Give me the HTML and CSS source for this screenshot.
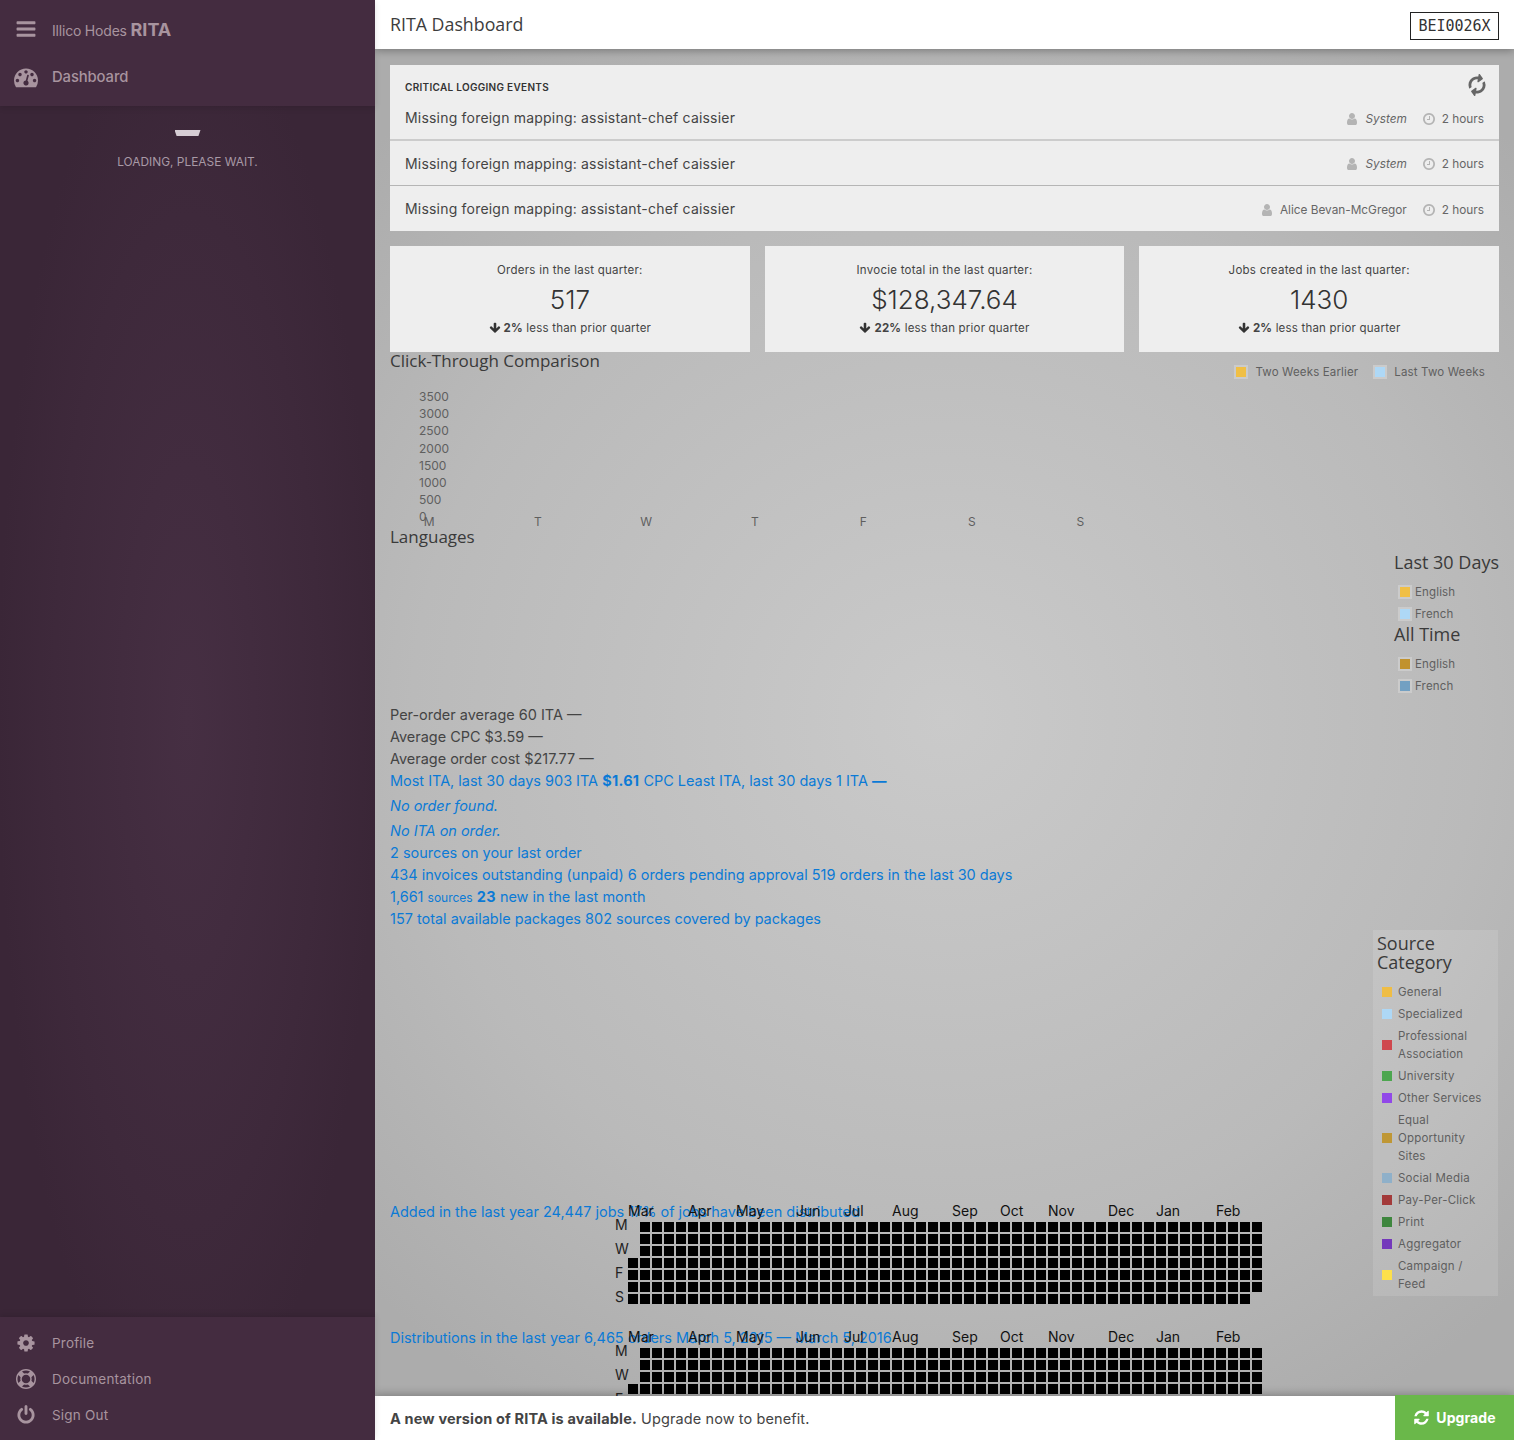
FILE: index.html
```html
<!DOCTYPE html>
<html lang="en">
<head>
    <meta charset="UTF-8">
    <title>RITA Dashboard</title>
    <link rel="stylesheet" href="styles.css">
</head>
<body>
    <svg class="icon-defs" xmlns="http://www.w3.org/2000/svg">
        <symbol id="i-bars" viewBox="0 0 1792 1792"><path d="M1664 1344v128q0 26-19 45t-45 19h-1408q-26 0-45-19t-19-45v-128q0-26 19-45t45-19h1408q26 0 45 19t19 45zm0-512v128q0 26-19 45t-45 19h-1408q-26 0-45-19t-19-45v-128q0-26 19-45t45-19h1408q26 0 45 19t19 45zm0-512v128q0 26-19 45t-45 19h-1408q-26 0-45-19t-19-45v-128q0-26 19-45t45-19h1408q26 0 45 19t19 45z"/></symbol>
        <symbol id="i-dash" viewBox="0 0 1792 1792"><path d="M384 1152q0-53-37.500-90.500t-90.500-37.500-90.500 37.500-37.500 90.500 37.500 90.500 90.500 37.500 90.500-37.500 37.500-90.500zm192-448q0-53-37.500-90.500t-90.500-37.500-90.500 37.500-37.500 90.500 37.500 90.500 90.500 37.500 90.500-37.500 37.500-90.500zm428 481l101-382q6-26-7.500-48.500t-38.500-29.500-48 6.500-30 39.500l-101 382q-60 5-107 43.500t-63 98.500q-20 77 20 146t117 89 146-20 89-117q16-60-6-117t-72-91zm660-33q0-53-37.500-90.500t-90.500-37.500-90.500 37.500-37.500 90.500 37.500 90.500 90.500 37.500 90.500-37.500 37.500-90.500zm-640-640q0-53-37.500-90.500t-90.500-37.500-90.500 37.500-37.500 90.500 37.500 90.500 90.500 37.500 90.500-37.500 37.500-90.500zm448 192q0-53-37.500-90.500t-90.500-37.500-90.500 37.500-37.500 90.500 37.500 90.500 90.500 37.500 90.500-37.500 37.500-90.500zm320 448q0 261-141 483-19 29-54 29h-1402q-35 0-54-29-141-221-141-483 0-182 71-348t191-286 286-191 348-71 348 71 286 191 191 286 71 348z"/></symbol>
        <symbol id="i-cog" viewBox="0 0 1792 1792"><path d="M1152 896q0-106-75-181t-181-75-181 75-75 181 75 181 181 75 181-75 75-181zm512-109v222q0 12-8 23t-20 13l-185 28q-19 54-39 91 35 50 107 138 10 12 10 25t-9 23q-27 37-99 108t-94 71q-12 0-26-9l-138-108q-44 23-91 38-16 136-29 186-7 28-36 28h-222q-14 0-24.500-8.500t-11.500-21.500l-28-184q-49-16-90-37l-141 107q-10 9-25 9-14 0-25-11-126-114-165-168-7-10-7-23 0-12 8-23 15-21 51-66.500t54-70.500q-27-50-41-99l-183-27q-13-2-21-12.500t-8-23.500v-222q0-12 8-23t19-13l186-28q14-46 39-92-40-57-107-138-10-12-10-24 0-10 9-23 26-36 98.500-107.500t94.500-71.500q13 0 26 10l138 107q44-23 91-38 16-136 29-186 7-28 36-28h222q14 0 24.500 8.500t11.500 21.500l28 184q49 16 90 37l142-107q9-9 24-9 13 0 25 10 129 119 165 170 7 8 7 22 0 12-8 23-15 21-51 66.500t-54 70.500q26 50 41 98l183 28q13 2 21 12.500t8 23.500z"/></symbol>
        <symbol id="i-ring" viewBox="0 0 1792 1792"><path d="M896 0q182 0 348 71t286 191 191 286 71 348-71 348-191 286-286 191-348 71-348-71-286-191-191-286-71-348 71-348 191-286 286-191 348-71zm0 128q-190 0-361 90l194 194q82-28 167-28t167 28l194-194q-171-90-361-90zm-678 1129l194-194q-28-82-28-167t28-167l-194-194q-90 171-90 361t90 361zm678 407q190 0 361-90l-194-194q-82 28-167 28t-167-28l-194 194q171 90 361 90zm0-384q159 0 271.500-112.500t112.500-271.500-112.500-271.500-271.500-112.500-271.500 112.500-112.500 271.500 112.500 271.500 271.500 112.500zm484-217l194 194q90-171 90-361t-90-361l-194 194q28 82 28 167t-28 167z"/></symbol>
        <symbol id="i-power" viewBox="0 0 1792 1792"><path d="M1664 896q0 156-61 298t-164 245-245 164-298 61-298-61-245-164-164-245-61-298q0-182 80.500-343t226.500-270q43-32 95.500-25t83.500 50q32 42 24.500 94.500t-49.500 84.500q-98 74-151.500 181t-53.500 228q0 104 40.500 198.500t109.500 163.500 163.500 109.500 198.500 40.500 198.500-40.500 163.500-109.500 109.500-163.500 40.500-198.500q0-121-53.500-228t-151.500-181q-42-32-49.500-84.500t24.500-94.500q31-43 84-50t95 25q146 109 226.500 270t80.500 343zm-640-768v640q0 52-38 90t-90 38-90-38-38-90v-640q0-52 38-90t90-38 90 38 38 90z"/></symbol>
        <symbol id="i-user" viewBox="0 0 1792 1792"><path d="M1536 1399q0 109-62.500 187t-150.500 78h-854q-88 0-150.500-78t-62.500-187q0-85 8.500-160.500t31.500-152 58.500-131 94-89 134.500-34.500q131 128 313 128t313-128q76 0 134.500 34.500t94 89 58.500 131 31.500 152 8.500 160.500zm-256-887q0 159-112.500 271.500t-271.500 112.500-271.500-112.500-112.500-271.500 112.500-271.500 271.500-112.500 271.500 112.500 112.500 271.500z"/></symbol>
        <symbol id="i-clock" viewBox="0 0 1792 1792"><path d="M1024 544v448q0 14-9 23t-23 9h-320q-14 0-23-9t-9-23v-64q0-14 9-23t23-9h224v-352q0-14 9-23t23-9h64q14 0 23 9t9 23zm416 352q0-148-73-273t-198-198-273-73-273 73-198 198-73 273 73 273 198 198 273 73 273-73 198-198 73-273zm224 0q0 209-103 385.500t-279.500 279.500-385.500 103-385.500-103-279.500-279.500-103-385.500 103-385.500 279.500-279.500 385.500-103 385.500 103 279.500 279.500 103 385.500z"/></symbol>
        <symbol id="i-refresh" viewBox="0 0 1792 1792"><path d="M1639 1056q0 5-1 7-64 268-268 434.500t-478 166.500q-146 0-282.500-55t-243.500-157l-129 129q-19 19-45 19t-45-19-19-45v-448q0-26 19-45t45-19h448q26 0 45 19t19 45-19 45l-137 137q71 66 161 102t187 36q134 0 250-65t186-179q11-17 53-117 8-23 30-23h192q13 0 22.500 9.500t9.500 22.500zm25-800v448q0 26-19 45t-45 19h-448q-26 0-45-19t-19-45 19-45l138-138q-148-137-349-137-134 0-250 65t-186 179q-11 17-53 117-8 23-30 23h-199q-13 0-22.500-9.500t-9.500-22.500v-7q65-268 270-434.500t480-166.500q146 0 284 55.500t245 156.500l130-129q19-19 45-19t45 19 19 45z"/></symbol>
        <symbol id="i-down" viewBox="0 0 1792 1792"><path d="M1675 832q0 53-37 90l-651 652q-39 37-91 37-53 0-90-37l-651-652q-38-36-38-90 0-53 38-91l74-75q39-37 91-37 53 0 90 37l294 294v-704q0-52 38-90t90-38h128q52 0 90 38t38 90v704l294-294q37-37 90-37 52 0 91 37l75 75q37 39 37 91z"/></symbol>
    </svg>

    <aside class="sidebar">
        <nav class="side-top">
            <a class="side-link brand"><svg class="side-icon"><use href="#i-bars"/></svg><span class="brand-name">Illico Hodes <b>RITA</b></span></a>
            <a class="side-link dash"><svg class="side-icon"><use href="#i-dash"/></svg>Dashboard</a>
        </nav>
        <div class="side-loading">
            <div class="loader"></div>
            <div class="loading-text">LOADING, PLEASE WAIT.</div>
        </div>
        <nav class="side-bottom">
            <a class="side-link"><svg class="side-icon small"><use href="#i-cog"/></svg>Profile</a>
            <a class="side-link"><svg class="side-icon small"><use href="#i-ring"/></svg>Documentation</a>
            <a class="side-link"><svg class="side-icon small"><use href="#i-power"/></svg>Sign Out</a>
        </nav>
    </aside>

    <div class="page">
        <header class="topbar">
            <h1>RITA Dashboard</h1>
            <span class="station">BEI0026X</span>
        </header>

        <main class="content">
            <section class="events">
                <div class="events-head">
                    <h6>CRITICAL LOGGING EVENTS</h6>
                    <svg class="spin"><use href="#i-refresh"/></svg>
                </div>
                <div class="event first">
                    <span>Missing foreign mapping: assistant-chef caissier</span>
                    <span class="event-meta"><svg><use href="#i-user"/></svg><em>System</em><svg><use href="#i-clock"/></svg>2 hours</span>
                </div>
                <div class="event second">
                    <span>Missing foreign mapping: assistant-chef caissier</span>
                    <span class="event-meta"><svg><use href="#i-user"/></svg><em>System</em><svg><use href="#i-clock"/></svg>2 hours</span>
                </div>
                <div class="event third">
                    <span>Missing foreign mapping: assistant-chef caissier</span>
                    <span class="event-meta"><svg><use href="#i-user"/></svg>Alice Bevan-McGregor<svg><use href="#i-clock"/></svg>2 hours</span>
                </div>
            </section>

            <section class="stats">
                <div class="stat">
                    <p class="stat-label">Orders in the last quarter:</p>
                    <p class="stat-value">517</p>
                    <p class="stat-note"><svg><use href="#i-down"/></svg><b>2%</b> less than prior quarter</p>
                </div>
                <div class="stat">
                    <p class="stat-label">Invocie total in the last quarter:</p>
                    <p class="stat-value">$128,347.64</p>
                    <p class="stat-note"><svg><use href="#i-down"/></svg><b>22%</b> less than prior quarter</p>
                </div>
                <div class="stat">
                    <p class="stat-label">Jobs created in the last quarter:</p>
                    <p class="stat-value">1430</p>
                    <p class="stat-note"><svg><use href="#i-down"/></svg><b>2%</b> less than prior quarter</p>
                </div>
            </section>

            <section class="clicks">
                <div class="clicks-head">
                    <h2 class="chart-title">Click-Through Comparison</h2>
                    <ul class="legend-row">
                        <li><i class="swatch yellow"></i>Two Weeks Earlier</li>
                        <li><i class="swatch blue"></i>Last Two Weeks</li>
                    </ul>
                </div>
                <div class="y-axis">
                    <span>3500</span><span>3000</span><span>2500</span><span>2000</span><span>1500</span><span>1000</span><span>500</span><span>0</span>
                </div>
                <div class="x-axis">
                    <span>M</span><span>T</span><span>W</span><span>T</span><span>F</span><span>S</span><span>S</span>
                </div>
            </section>

            <section class="languages">
                <h2 class="chart-title lang-title">Languages</h2>
                <div class="lang-legend">
                    <h2>Last 30 Days</h2>
                    <ul class="legend-col">
                        <li><i class="swatch yellow"></i>English</li>
                        <li><i class="swatch blue"></i>French</li>
                    </ul>
                    <h2>All Time</h2>
                    <ul class="legend-col">
                        <li><i class="swatch dark-yellow"></i>English</li>
                        <li><i class="swatch dark-blue"></i>French</li>
                    </ul>
                </div>
            </section>

            <section class="figures">
                <p>Per-order average 60 ITA —</p>
                <p>Average CPC $3.59 —</p>
                <p>Average order cost $217.77 —</p>
                <p><a>Most ITA, last 30 days 903 ITA <b>$1.61</b> CPC Least ITA, last 30 days 1 ITA <b>—</b></a></p>
                <p class="none first-none"><a>No order found.</a></p>
                <p class="none"><a>No ITA on order.</a></p>
                <p><a>2 sources on your last order</a></p>
                <p><a>434 invoices outstanding (unpaid) 6 orders pending approval 519 orders in the last 30 days</a></p>
                <p><a>1,661 <small>sources</small> <b>23</b> new in the last month</a></p>
                <p><a>157 total available packages 802 sources covered by packages</a></p>
            </section>

            <section class="sources">
                <div class="source-box">
                    <h2>Source Category</h2>
                    <ul class="source-list">
                        <li><i class="dot c1"></i><span>General</span></li>
                        <li><i class="dot c2"></i><span>Specialized</span></li>
                        <li><i class="dot c3"></i><span>Professional Association</span></li>
                        <li><i class="dot c4"></i><span>University</span></li>
                        <li><i class="dot c5"></i><span>Other Services</span></li>
                        <li><i class="dot c6"></i><span>Equal Opportunity Sites</span></li>
                        <li><i class="dot c7"></i><span>Social Media</span></li>
                        <li><i class="dot c8"></i><span>Pay-Per-Click</span></li>
                        <li><i class="dot c9"></i><span>Print</span></li>
                        <li><i class="dot c10"></i><span>Aggregator</span></li>
                        <li><i class="dot c11"></i><span>Campaign / Feed</span></li>
                    </ul>
                </div>
            </section>

            <section class="calendar added">
                <p class="calendar-text"><a>Added in the last year 24,447 jobs 17% of jobs have been distributed</a></p>
                <div class="heat">
                    <div class="months">
                        <span class="w5">Mar</span><span class="w4">Apr</span><span class="w5">May</span><span class="w4">Jun</span><span class="w4">Jul</span><span class="w5">Aug</span><span class="w4">Sep</span><span class="w4">Oct</span><span class="w5">Nov</span><span class="w4">Dec</span><span class="w5">Jan</span><span class="w4">Feb</span>
                    </div>
                    <div class="heat-body">
                        <div class="days"><span>M</span><span></span><span>W</span><span></span><span>F</span><span></span><span>S</span></div>
                        <div class="weeks">
                            <div class="week late"></div><div class="week late"></div><div class="week late"></div>
                            <div class="week"></div><div class="week"></div><div class="week"></div>
                            <div class="week short"></div>
                        </div>
                    </div>
                </div>
            </section>

            <section class="calendar distributions">
                <p class="calendar-text"><a>Distributions in the last year 6,465 orders March 5, 2015 — March 5, 2016</a></p>
                <div class="heat">
                    <div class="months">
                        <span class="w5">Mar</span><span class="w4">Apr</span><span class="w5">May</span><span class="w4">Jun</span><span class="w4">Jul</span><span class="w5">Aug</span><span class="w4">Sep</span><span class="w4">Oct</span><span class="w5">Nov</span><span class="w4">Dec</span><span class="w5">Jan</span><span class="w4">Feb</span>
                    </div>
                    <div class="heat-body">
                        <div class="days"><span>M</span><span></span><span>W</span><span></span><span>F</span><span></span><span>S</span></div>
                        <div class="weeks">
                            <div class="week late"></div><div class="week late"></div><div class="week late"></div>
                            <div class="week"></div><div class="week"></div><div class="week"></div>
                            <div class="week short"></div>
                        </div>
                    </div>
                </div>
            </section>
        </main>

        <footer class="upgrade-bar">
            <p><b>A new version of RITA is available.</b> Upgrade now to benefit.</p>
            <a class="upgrade-btn"><svg><use href="#i-refresh"/></svg>Upgrade</a>
        </footer>
    </div>
</body>
</html>
```
FILE: styles.css
```css
* {
    box-sizing: border-box;
}

html, body {
    height: 100%;
}

body {
    margin: 0;
    display: flex;
    height: 1440px;
    overflow: hidden;
    font-family: 'Inter', 'Liberation Sans', sans-serif;
    font-size: 14px;
    color: #444;
}

h1, h2, h6, p, ul {
    margin: 0;
    padding: 0;
}

ul {
    list-style: none;
}

a {
    color: inherit;
}

.icon-defs {
    display: none;
}

/* Sidebar */
.sidebar {
    width: 375px;
    flex: none;
    display: flex;
    flex-direction: column;
    background: radial-gradient(ellipse 190px 720px at 187px 720px, #462f43, #3e293b 70%, #3a2637);
    color: #a8949f;
    z-index: 2;
}

.side-top, .side-bottom {
    background: #442c40;
}

.side-top {
    height: 106px;
    box-shadow: 0 2px 6px rgba(0, 0, 0, 0.12);
}

.side-bottom {
    padding-top: 8px;
    height: 123px;
    box-shadow: 0 -2px 6px rgba(0, 0, 0, 0.12);
}

.side-link {
    display: flex;
    align-items: center;
    height: 36px;
    padding-left: 15px;
    font-size: 13.500px;
    letter-spacing: 0.2px;
}

.side-icon {
    width: 22px;
    height: 22px;
    margin-right: 15px;
    fill: currentColor;
}

.side-icon.small {
    width: 20px;
    height: 20px;
    margin-left: 1px;
    margin-right: 16px;
}

.brand {
    height: 48px;
    margin-top: 5px;
}

.brand-name {
    font-size: 14px;
    letter-spacing: -0.2px;
}

.brand-name b {
    font-size: 18px;
    letter-spacing: 0;
}

.dash {
    height: 46px;
    padding-top: 2px;
    font-size: 14.800px;
    font-weight: 500;
    letter-spacing: -0.1px;
}

.dash .side-icon {
    width: 24px;
    height: 24px;
    margin-left: -1px;
    margin-right: 14px;
}

.side-loading {
    flex: 1;
    padding-top: 24px;
    text-align: center;
}

.loader {
    width: 26px;
    height: 6px;
    margin: 0 auto 18px;
    background: #d6cdd4;
    clip-path: polygon(0 0, 100% 0, 92% 100%, 8% 100%);
}

.loading-text {
    font-size: 11.900px;
    line-height: 16px;
    color: #a899a6;
}

/* Top bar and page frame */
.page {
    flex: 1;
    min-width: 0;
    display: flex;
    flex-direction: column;
}

.topbar {
    height: 49px;
    flex: none;
    display: flex;
    align-items: center;
    justify-content: space-between;
    padding: 0 15px;
    background: #fff;
    box-shadow: 0 2px 8px rgba(0, 0, 0, 0.3);
    z-index: 1;
}

.topbar h1 {
    margin-top: -1px;
    font-family: 'Open Sans', sans-serif;
    font-size: 17.800px;
    font-weight: 400;
    color: #3d3d3d;
}

.station {
    width: 89px;
    height: 28px;
    margin-top: 2px;
    border: 1px solid #222;
    font-family: 'DejaVu Sans Mono', monospace;
    font-size: 15px;
    line-height: 26px;
    text-align: center;
    color: #333;
}

.content {
    flex: 1;
    min-height: 0;
    overflow: hidden;
    padding: 16px 15px 0;
    background: radial-gradient(ellipse 820px 800px at 570px 670px, #cacaca, #bababa 65%, #acacac);
}

/* Critical events */
.events {
    background: #eee;
    height: 166px;
}

.events-head {
    height: 41px;
    padding: 10px 12px 0 15px;
    display: flex;
    justify-content: space-between;
    align-items: flex-start;
}

.events-head h6 {
    margin-top: 6px;
    font-size: 10px;
    font-weight: 600;
    letter-spacing: 0.3px;
    color: #333;
}

.spin {
    width: 20px;
    height: 20px;
    fill: #666;
    transform: rotate(-35deg);
}

.event {
    display: flex;
    justify-content: space-between;
    align-items: center;
    padding: 0 15px;
    font-size: 14px;
    letter-spacing: 0.2px;
    color: #444;
}

.event.first {
    height: 35px;
    padding-bottom: 11px;
    border-bottom: 2px solid #ccc;
}

.event.second {
    height: 45px;
    border-bottom: 1px solid #b5b5b5;
}

.event.third {
    height: 45px;
}

.event-meta {
    display: flex;
    align-items: center;
    margin-top: 2px;
    font-size: 11.800px;
    letter-spacing: 0;
    color: #666;
}

.event.first .event-meta {
    margin-top: 4px;
}

.event-meta em {
    font-style: italic;
}

.event-meta svg {
    width: 14px;
    height: 14px;
    margin-right: 6px;
    margin-left: 15px;
    fill: #b4b4b4;
}

/* Stat cards */
.stats {
    display: grid;
    grid-template-columns: repeat(3, 1fr);
    gap: 15px;
    margin-top: 15px;
}

.stat {
    height: 106px;
    padding-top: 17px;
    background: #eee;
    text-align: center;
}

.stat-label {
    font-size: 11.500px;
    line-height: 14px;
    letter-spacing: 0.25px;
    color: #444;
}

.stat-value {
    margin-top: 8px;
    font-size: 26px;
    font-weight: 300;
    line-height: 30px;
    color: #333;
}

.stat-note {
    margin-top: 6px;
    font-size: 11.500px;
    line-height: 15px;
    letter-spacing: 0.2px;
    color: #444;
}

.stat-note svg {
    width: 12px;
    height: 12px;
    margin-right: 3px;
    vertical-align: -2px;
    fill: #333;
}

/* Charts */
h2 {
    font-family: 'Open Sans', sans-serif;
    font-size: 18px;
    line-height: 18px;
    font-weight: 400;
    color: #3a3a3a;
}

h2.chart-title {
    font-size: 17px;
}

h2.lang-title {
    margin-top: 1px;
}

.clicks {
    height: 175px;
}

.clicks-head {
    display: flex;
    justify-content: space-between;
}

.legend-row {
    display: flex;
    gap: 15px;
    padding: 13px 14px 0 0;
}

.legend-row li, .legend-col li {
    display: flex;
    align-items: center;
    font-size: 11.500px;
    line-height: 14px;
    letter-spacing: 0.15px;
    color: #5f5f5f;
}

.swatch {
    width: 14px;
    height: 14px;
    margin-right: 7px;
    border: 2px solid #cbcbcb;
}

.yellow { background: #f0bf45; }
.blue { background: #aed8f6; }
.dark-yellow { background: #c1922e; }
.dark-blue { background: #73a0c2; }

.y-axis {
    display: flex;
    flex-direction: column;
    margin: 9px 0 0 29px;
    font-size: 12px;
    line-height: 17.200px;
    color: #5f5f5f;
}

.x-axis {
    display: grid;
    grid-template-columns: repeat(7, 108.500px);
    margin: -11px 0 0 -15px;
    font-size: 12px;
    line-height: 14px;
    text-align: center;
    color: #5f5f5f;
}

.languages {
    height: 177px;
    display: flex;
    justify-content: space-between;
}

.lang-legend {
    padding: 26px 0 0;
    width: 105px;
}

.legend-col {
    padding: 10px 0 0 4px;
}

.legend-col li {
    height: 22px;
}

.legend-col .swatch {
    margin-right: 3px;
}

/* Figures */
.figures {
    height: 226px;
    font-size: 14.460px;
    color: #444;
}

.figures p {
    height: 22px;
    line-height: 22px;
}

.figures a {
    color: #0b7ad6;
}

.figures b {
    letter-spacing: 0.3px;
}

.figures small {
    font-size: 12px;
}

.none {
    font-style: italic;
}

.figures .first-none {
    margin-top: 3px;
}

.figures .first-none + .none {
    margin-top: 3px;
}

/* Source legend */
.sources {
    height: 271px;
    display: flex;
    justify-content: flex-end;
}

.source-box {
    width: 125px;
    height: 366px;
    margin-right: 1px;
    padding: 4px 4px;
    background: rgba(255, 255, 255, 0.12);
}

.source-box h2 {
    line-height: 19px;
}

.source-list {
    margin-top: 9px;
    padding-left: 4px;
}

.source-list li {
    display: flex;
    align-items: center;
    padding: 2px 0;
    font-size: 11.500px;
    line-height: 18px;
    letter-spacing: 0.2px;
    color: #5f5f5f;
}

.source-list span {
    max-width: 88px;
}

.dot {
    flex: none;
    width: 10px;
    height: 10px;
    margin: 0 6px 0 1px;
}

.c1 { background: #efbd45; }
.c2 { background: #aed8f6; }
.c3 { background: #cf484e; }
.c4 { background: #4da64f; }
.c5 { background: #9148e8; }
.c6 { background: #bf9735; }
.c7 { background: #8fb0c9; }
.c8 { background: #a33a3a; }
.c9 { background: #3e863e; }
.c10 { background: #7438bb; }
.c11 { background: #fde04c; }

/* Calendar heat maps: text and chart share one grid cell, so they overlap */
.calendar {
    display: grid;
    height: 126px;
    font-size: 14.460px;
}

.calendar-text, .heat {
    grid-area: 1 / 1;
}

.calendar-text {
    line-height: 22px;
    color: #0b7ad6;
}

.heat {
    margin-left: 223px;
    color: #111;
}

.months {
    display: flex;
    margin-left: 15px;
    height: 19px;
    font-size: 14px;
    line-height: 19px;
}

.w4 { width: 48px; }
.w5 { width: 60px; }

.heat-body {
    display: flex;
    margin-top: 2px;
}

.days {
    width: 15px;
    display: flex;
    flex-direction: column;
    gap: 2px;
    margin-top: -2px;
    padding-left: 2px;
    font-size: 14px;
    color: #222;
}

.days span {
    height: 10px;
    line-height: 10px;
}

.weeks {
    width: 634px;
    display: flex;
    flex-direction: column;
    gap: 2px;
}

.week {
    height: 10px;
    flex: none;
    background: repeating-linear-gradient(to right, #000 0 10px, transparent 10px 12px);
}

.week.late {
    margin-left: 12px;
}

.week.short {
    margin-right: 12px;
}

/* Upgrade bar */
.upgrade-bar {
    height: 44px;
    flex: none;
    display: flex;
    align-items: center;
    justify-content: space-between;
    padding-left: 15px;
    background: #fff;
    box-shadow: 0 -2px 8px rgba(0, 0, 0, 0.25);
    z-index: 1;
    font-size: 14.500px;
    letter-spacing: 0.1px;
    color: #444;
}

.upgrade-bar b {
    letter-spacing: 0.15px;
}

.upgrade-btn {
    width: 119px;
    height: 45px;
    margin-top: -1px;
    display: flex;
    align-items: center;
    justify-content: center;
    background: #6ab84a;
    color: #fff;
    font-weight: 700;
    font-size: 14px;
}

.upgrade-btn svg {
    width: 17px;
    height: 17px;
    margin-right: 6px;
    fill: #fff;
}
```
